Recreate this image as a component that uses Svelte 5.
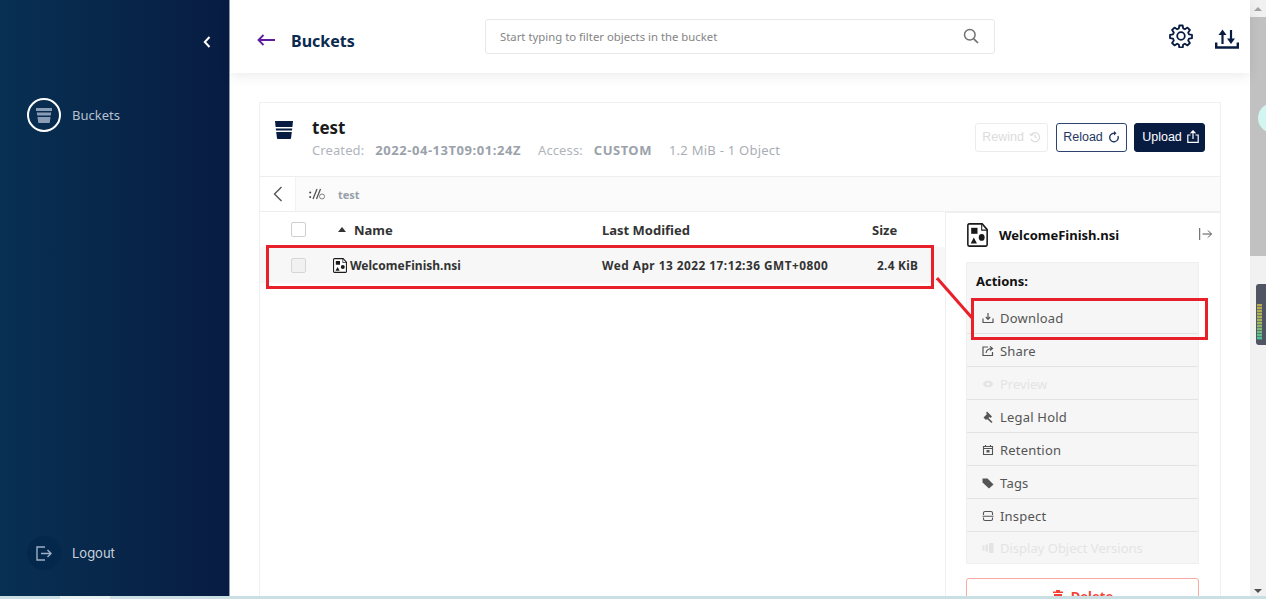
<script>
  const actions = [
    { label: 'Download', icon: 'download' },
    { label: 'Share', icon: 'share' },
    { label: 'Preview', icon: 'eye', off: true },
    { label: 'Legal Hold', icon: 'gavel' },
    { label: 'Retention', icon: 'calendar' },
    { label: 'Tags', icon: 'tag' },
    { label: 'Inspect', icon: 'inspect' },
    { label: 'Display Object Versions', icon: 'versions', off: true }
  ];
</script>

{#snippet fileIcon(w, h)}
  <svg width={w} height={h} viewBox="0 0 20 20" preserveAspectRatio="none" class="fileicon">
    <path d="M2 .8h12.500l4.700 4.700V18a1.200 1.200 0 0 1-1.200 1.200H2A1.200 1.200 0 0 1 .8 18V2A1.200 1.200 0 0 1 2 .8z" fill="#fff" stroke="#1a1a1a" stroke-width="1.500"/>
    <path d="M14 1v5h5" fill="none" stroke="#1a1a1a" stroke-width="1"/>
    <rect x="4" y="4" width="6" height="5" fill="#1a1a1a"/>
    <circle cx="14" cy="12" r="2.800" fill="#1a1a1a"/>
    <path d="M3.500 17l3-5 3 5z" fill="#1a1a1a"/>
  </svg>
{/snippet}

{#snippet actionIcon(name)}
  <svg width="12" height="12" viewBox="0 0 12 12" class="aicon">
    {#if name === 'download'}
      <path d="M6 1v6M3.800 5L6 7.300 8.200 5M1 6.500V10.500H11V6.500" fill="none" stroke="currentColor" stroke-width="1.200"/>
    {:else if name === 'share'}
      <path d="M10.500 7v3.500h-9.500V2h5M4 8c.5-3 2.500-4.500 6-4.500M8 1.500l2.500 2L8 5.500" fill="none" stroke="currentColor" stroke-width="1.200"/>
    {:else if name === 'eye'}
      <path d="M.5 6C2 3.500 4 2.500 6 2.500S10 3.500 11.500 6C10 8.500 8 9.500 6 9.500S2 8.500.5 6z" fill="currentColor"/>
      <circle cx="6" cy="6" r="1.500" fill="#f6f6f6"/>
    {:else if name === 'gavel'}
      <path d="M5 .5l5 5-1.500 1.500-1-1-1 1 4 4-1 1-4.500-4-1 1-2.500-2.500 3.500-3.500-1-1z" fill="currentColor"/>
    {:else if name === 'calendar'}
      <path d="M1.500 2.500h9v8h-9zM1.500 4.500h9M3.500 1v1.500M8.500 1v1.500" fill="none" stroke="currentColor" stroke-width="1.100"/>
      <rect x="4.500" y="6" width="3" height="2.500" fill="currentColor"/>
    {:else if name === 'tag'}
      <path d="M.5 1.500h5l6 6-4.500 4-6.500-6z" fill="currentColor"/>
    {:else if name === 'inspect'}
      <path d="M1.500 5V3a1.500 1.500 0 0 1 1.500-1.500h6A1.500 1.500 0 0 1 10.500 3v2M1.500 7.500V9A1.500 1.500 0 0 0 3 10.500h6A1.500 1.500 0 0 0 10.500 9V7.500M.5 6.200h11" fill="none" stroke="currentColor" stroke-width="1.100"/>
    {:else}
      <path d="M.5 3.500h2v5h-2zM3.500 2.500h2.500v7H3.500zM7 1h4.500v10H7z" fill="currentColor"/>
    {/if}
  </svg>
{/snippet}

<div class="page">
  <aside class="sidebar">
    <div class="collapse">
      <svg width="8" height="12" viewBox="0 0 8 12"><path d="M6.500 1L1.800 6l4.700 5" fill="none" stroke="#fff" stroke-width="2"/></svg>
    </div>
    <div class="navitem">
      <span class="ring">
        <svg width="16" height="15" viewBox="0 0 16 15"><path d="M0 0h16v3H0zM.8 4.500h14.400l-.4 3H1.200zM1.500 9h13l-.8 6H2.300z" fill="#8a9cb6"/></svg>
      </span>
      <span class="navlabel">Buckets</span>
    </div>
    <div class="spacer"></div>
    <div class="navitem logout">
      <span class="ring dark">
        <svg width="16" height="15" viewBox="0 0 16 15"><path d="M9 1H1v13h8M5 7.500h10M11.500 4l3.500 3.500-3.500 3.500" fill="none" stroke="#9fb0c6" stroke-width="1.400"/></svg>
      </span>
      <span class="navlabel lg">Logout</span>
    </div>
  </aside>

  <main class="main">
    <header class="topbar">
      <svg class="back" width="18" height="12" viewBox="0 0 18 12"><path d="M18 6H1.500M6.500 1L1.500 6l5 5" fill="none" stroke="#5e1b9e" stroke-width="1.800"/></svg>
      <h1>Buckets</h1>
      <div class="search">
        <span>Start typing to filter objects in the bucket</span>
        <svg width="16" height="16" viewBox="0 0 16 16"><circle cx="6.800" cy="6.800" r="5.300" fill="none" stroke="#707070" stroke-width="1.500"/><path d="M10.800 10.800L15 15" stroke="#707070" stroke-width="1.700"/></svg>
      </div>
      <div class="topicons">
        <svg width="24" height="24" viewBox="0 0 24 24"><path d="M10.300 1.500h3.400l.5 3 1.700.8 2.600-1.700 2.400 2.400-1.700 2.600.8 1.700 3 .5v3.400l-3 .5-.8 1.700 1.700 2.600-2.400 2.400-2.600-1.700-1.700.8-.5 3h-3.400l-.5-3-1.700-.8-2.600 1.700-2.400-2.400 1.700-2.600-.8-1.700-3-.5v-3.400l3-.5.8-1.700-1.700-2.600 2.400-2.400 2.600 1.700 1.700-.8z" fill="none" stroke="#081c42" stroke-width="1.800" stroke-linejoin="round"/><circle cx="12" cy="12" r="3.800" fill="none" stroke="#081c42" stroke-width="1.800"/></svg>
        <svg class="transfer" width="24" height="20" viewBox="0 0 24 20">
          <path d="M1.200 13.500v5h21.600v-5" fill="none" stroke="#081c42" stroke-width="2.400"/>
          <path d="M7.500 15V5" stroke="#081c42" stroke-width="2.200"/>
          <path d="M3.500 6L7.500 .5 11.500 6z" fill="#081c42"/>
          <path d="M16 1v10" stroke="#081c42" stroke-width="2.200"/>
          <path d="M12 9.500h8L16 15z" fill="#081c42"/>
        </svg>
      </div>
    </header>

    <div class="content">
      <section class="card">
        <div class="cardhead">
          <svg class="bucket" width="18" height="18" viewBox="0 0 18 18"><path d="M0 0h18l-.6 6H.6zM.8 7.500h16.400l-.2 2H1zM1.200 11h15.600l-.8 6.500a1 1 0 0 1-1 .5H3a1 1 0 0 1-1-.5z" fill="#081c42"/></svg>
          <div class="titleblock">
            <h2>test</h2>
            <div class="meta">
              <span>Created:</span><b class="date">2022-04-13T09:01:24Z</b>
              <span class="m2">Access:</span><b class="access">CUSTOM</b>
              <span class="m3">1.2 MiB - 1 Object</span>
            </div>
          </div>
          <div class="buttons">
            <button class="btn ghost">Rewind
              <svg width="12" height="12" viewBox="0 0 12 12"><path d="M2.500 3.500A4.500 4.500 0 1 1 2 8M.8 2.500l1.500 2 2-1M6 3.500V6l2 1" fill="none" stroke="currentColor" stroke-width="1.200"/></svg>
            </button>
            <button class="btn outline">Reload
              <svg width="12" height="12" viewBox="0 0 12 12"><g transform="matrix(-1 0 0 1 12 0)"><path d="M6 2.200A4.300 4.300 0 1 1 2 5" fill="none" stroke="currentColor" stroke-width="1.400"/><path d="M6 0v4.500L3.500 2.200z" fill="currentColor"/></g></svg>
            </button>
            <button class="btn solid">Upload
              <svg width="12" height="13" viewBox="0 0 12 13"><path d="M3.500 5H.8v7.300h10.400V5H8.500M6 9V1M3.500 3.300L6 .8l2.500 2.500" fill="none" stroke="currentColor" stroke-width="1.200"/></svg>
            </button>
          </div>
        </div>

        <div class="crumbs">
          <div class="crumbback">
            <svg width="10" height="16" viewBox="0 0 10 16"><path d="M8.500 1L1.500 8l7 7" fill="none" stroke="#555" stroke-width="1.400"/></svg>
          </div>
          <svg class="rooticon" width="17" height="12" viewBox="0 0 17 12">
            <circle cx="1.200" cy="4.500" r="1" fill="#444"/><circle cx="1.200" cy="9" r="1" fill="#444"/>
            <path d="M4 11L8 1M7.500 11L11.500 1" stroke="#555" stroke-width="1.300"/>
            <circle cx="13" cy="8.500" r="2.500" fill="none" stroke="#666" stroke-width=".8"/>
          </svg>
          <span class="crumbtext">test</span>
        </div>

        <div class="lower">
          <div class="table">
            <div class="row head">
              <span class="cb"></span>
              <span class="name"><span class="caret"></span>Name</span>
              <span class="mod">Last Modified</span>
              <span class="size">Size</span>
            </div>
            <div class="row item">
              <span class="cb"></span>
              <span class="name file">{@render fileIcon(14, 15)}WelcomeFinish.nsi</span>
              <span class="mod">Wed Apr 13 2022 17:12:36 GMT+0800</span>
              <span class="size sz">2.4 KiB</span>
            </div>
          </div>

          <div class="panel">
            <div class="panelhead">
              {@render fileIcon(21, 24)}
              <span class="panelname">WelcomeFinish.nsi</span>
              <svg class="closeicon" width="13" height="12" viewBox="0 0 13 12"><path d="M.7 0v12M3.500 6H12.500M9 2.500L12.500 6 9 9.500" fill="none" stroke="#555" stroke-width="1"/></svg>
            </div>
            <div class="actions">
              <div class="actionstitle">Actions:</div>
              {#each actions as a}
                <div class="action" class:off={a.off}>
                  {@render actionIcon(a.icon)}
                  <span>{a.label}</span>
                </div>
              {/each}
            </div>
            <button class="delete">
              <svg width="12" height="13" viewBox="0 0 12 13"><path d="M1 2.500h10V4H1zM4 1h4v1.500H4zM2 5h8v8H2z" fill="#f44336"/></svg>
              Delete
            </button>
          </div>
        </div>
      </section>
    </div>
  </main>

  <div class="scrollbar">
    <div class="arrow up"></div>
    <div class="thumb"></div>
    <div class="track"></div>
    <div class="arrow down"></div>
  </div>

  <div class="annot box1"></div>
  <div class="annot box2"></div>
  <svg class="annot connector" width="40" height="44" viewBox="0 0 40 44"><path d="M1 1l36 41" stroke="#e8202a" stroke-width="3"/></svg>
  <div class="overlay bubble"></div>
  <div class="overlay meter"><div class="bars"></div></div>
  <div class="overlay strip"></div>
  <div class="overlay striplight"></div>
</div>

<style>
  :global(body) { margin: 0; background: #fff; }
  .page {
    position: relative;
    display: flex;
    width: 1266px;
    height: 599px;
    overflow: hidden;
    font-family: "Noto Sans", "Open Sans", sans-serif;
    color: #000;
  }
  .sidebar {
    width: 229px;
    flex: none;
    display: flex;
    flex-direction: column;
    background: linear-gradient(90deg, #073052 0%, #081c42 100%);
    border-right: 1px solid #8b9ab5;
    box-sizing: content-box;
  }
  .collapse { height: 14px; margin-top: 36px; padding-right: 18px; display: flex; justify-content: flex-end; }
  .navitem { display: flex; align-items: center; gap: 11px; padding-left: 27px; margin-top: 48px; }
  .ring {
    width: 34px; height: 34px; border-radius: 50%;
    border: 2px solid #fff; box-sizing: border-box;
    display: flex; align-items: center; justify-content: center;
  }
  .ring.dark { border: none; background: #04274c; }
  .navlabel { font-size: 13px; color: #b6c1d0; }
  .navlabel.lg { font-family: Inter, sans-serif; color: #c9d2dd; }
  .spacer { flex: 1; }
  .navitem.logout { margin-top: 0; margin-bottom: 29px; }

  .main { width: 1020px; flex: none; display: flex; flex-direction: column; }
  .topbar {
    height: 73px; flex: none; display: flex; align-items: center;
    padding: 0 11px 0 27px; box-sizing: border-box;
    box-shadow: 0 3px 12px rgba(0,0,0,.08);
    position: relative;
  }
  .back { margin-top: 7px; }
  h1 { font-size: 16px; font-weight: 700; color: #0b2a4f; margin: 9px 0 0 16px; width: 194px; }
  .search {
    width: 510px; height: 35px; box-sizing: border-box;
    border: 1px solid #e8e8e8; border-radius: 3px;
    display: flex; align-items: center; justify-content: space-between;
    padding: 0 15px 0 14px; margin-bottom: 1px;
  }
  .search span { font-size: 11.350px; color: #858585; }
  .topicons { margin-left: auto; display: flex; align-items: center; gap: 22px; margin-bottom: 1px; }
  .transfer { margin-top: 5px; }

  .content { padding: 29px 29px 0; flex: 1; }
  .card { border: 1px solid #f0f0f0; border-bottom: none; width: 962px; box-sizing: border-box; height: 520px; }
  .cardhead { height: 74px; display: flex; position: relative; box-sizing: border-box; border-bottom: 1px solid #eee; }
  .bucket { margin: 18px 0 0 15px; }
  .titleblock { margin-left: 19px; padding-top: 13px; }
  h2 { font-size: 17px; line-height: 23px; font-weight: 700; color: #1a1a1a; margin: 0; }
  .meta { font-size: 13px; color: #b0b5bb; line-height: 22px; display: flex; letter-spacing: .1px; }
  .meta b { color: #9ba2aa; font-weight: 700; }
  .meta .date { margin-left: 11px; letter-spacing: .55px; }
  .meta .access { margin-left: 11px; letter-spacing: .5px; }
  .meta .m2 { margin-left: 17px; }
  .meta .m3 { margin-left: 17px; color: #a9aeb4; letter-spacing: .25px; }
  .buttons { margin-left: auto; padding: 20px 15px 0 0; display: flex; gap: 8px; align-items: flex-start; }
  .btn {
    height: 29px; box-sizing: border-box; border-radius: 3px;
    font: 12.500px "Liberation Sans", sans-serif;
    display: flex; align-items: center; justify-content: center; gap: 5px; padding: 0 0 2px;
    background: #fff;
  }
  .ghost { width: 73px; border: 1px solid #ececec; color: #dcdcdc; }
  .outline { width: 71px; border: 1px solid #2d4470; color: #1f3763; }
  .solid { width: 71px; border: 1px solid #081c42; background: #081c42; color: #fff; margin-left: -1px; padding-left: 2px; }

  .crumbs { height: 35px; box-sizing: border-box; display: flex; align-items: center; background: #fbfbfb; border-bottom: 1px solid #eee; }
  .crumbback { width: 36px; height: 100%; background: #fff; display: flex; align-items: center; justify-content: center; border-right: 1px solid #f2f2f2; box-sizing: border-box; }
  .rooticon { margin-left: 13px; }
  .crumbtext { font-size: 11px; font-weight: 700; color: #97a0aa; margin-left: 12px; }

  .lower { display: flex; }
  .table { width: 685px; flex: none; }
  .row { display: flex; align-items: center; position: relative; }
  .row.head { height: 35px; }
  .row.item { height: 36px; background: #f7f7f7; box-sizing: border-box; }
  .cb { width: 13px; height: 13px; border: 1px solid #cfcfcf; border-radius: 2px; margin-left: 31px; background: #fff; flex: none; }
  .item .cb { background: #f1f1f1; border-color: #d6d6d6; }
  .name { width: 264px; margin-left: 32px; flex: none; display: flex; align-items: center; font-size: 13px; font-weight: 700; color: #333; }
  .name.file { margin-left: 27px; width: 269px; font-size: 12px; gap: 3px; }
  .caret { width: 0; height: 0; border: 4px solid transparent; border-bottom: 5px solid #333; border-top: 0; margin: 0 8px 0 0; }
  .mod { width: 270px; flex: none; font-size: 13px; font-weight: 700; color: #333; }
  .item .mod { font-size: 11.800px; letter-spacing: .5px; }
  .size { font-size: 13px; font-weight: 700; color: #333; }
  .sz { font-size: 11.800px; margin-left: 5px; letter-spacing: .3px; }

  .panel { width: 275px; flex: none; box-sizing: border-box; border-left: 1px solid #f0f0f0; padding: 0 21px 0 20px; border-top: 1px solid #f0f0f0; }
  .panelhead { height: 49px; padding: 0 0 6px 1px; box-sizing: border-box; display: flex; align-items: center; gap: 11px; position: relative; }
  .panelname { font-size: 13px; font-weight: 700; color: #111; }
  .closeicon { position: absolute; right: -13px; top: 15px; }
  .actions { background: #f6f6f6; border: 1px solid #efefef; width: 233px; box-sizing: border-box; }
  .actionstitle { font-size: 13px; font-weight: 700; color: #111; height: 38px; line-height: 36px; padding-left: 9px; box-sizing: border-box; }
  .action {
    height: 33px; padding-top: 2px; box-sizing: border-box; display: flex; align-items: center; gap: 6px; padding-left: 15px;
    font-size: 13px; color: #555; border-bottom: 1px solid #e3e3e3;
    letter-spacing: .2px;
  }
  .action:last-child { border-bottom: none; height: 31px; padding-top: 0; }
  .aicon { flex: none; }
  .action.off { color: #e4e4e4; letter-spacing: 0; }
  .delete {
    width: 233px; height: 35px; margin-top: 14px; box-sizing: border-box;
    background: #fff; border: 1px solid #f9a9a4; border-radius: 3px;
    color: #f44336; font: 700 13px "Noto Sans", sans-serif;
    display: flex; align-items: center; justify-content: center; gap: 7px;
  }

  .scrollbar { width: 16px; flex: none; display: flex; flex-direction: column; background: #f1f1f1; }
  .arrow { height: 17px; flex: none; display: flex; align-items: center; justify-content: center; }
  .arrow.up::before { content: ""; border: 4px solid transparent; border-bottom: 4px solid #a3a3a3; border-top: 0; }
  .arrow.down::before { content: ""; border: 4px solid transparent; border-top: 4px solid #505050; border-bottom: 0; }
  .thumb { height: 239px; flex: none; background: #c1c1c1; }
  .track { flex: 1; }

  .annot { position: absolute; }
  .box1 { left: 266px; top: 245px; width: 668px; height: 44px; border: 3px solid #e8202a; box-sizing: border-box; }
  .box2 { left: 971px; top: 298px; width: 237px; height: 42px; border: 3px solid #e8202a; box-sizing: border-box; }
  .connector { left: 936px; top: 277px; }

  .overlay { position: absolute; }
  .bubble { left: 1258px; top: 103px; width: 30px; height: 30px; border-radius: 50%; background: #d2f5ef; }
  .meter { left: 1256px; top: 284px; width: 10px; height: 61px; background: #4f5563; border-radius: 3px 0 0 3px; }
  .bars {
    position: absolute; left: 1px; top: 20px; width: 5px; height: 36px;
    background:
      repeating-linear-gradient(180deg, transparent 0 2px, rgba(79,85,99,.6) 2px 3px),
      linear-gradient(180deg, #b8a94e, #a3b45c 50%, #45c39a);
  }
  .strip { left: 0; bottom: 0; width: 100%; height: 3px; background: #cadfe3; }
  .striplight { left: 60px; bottom: 0; width: 50px; height: 3px; background: #e6f1f2; }
</style>
